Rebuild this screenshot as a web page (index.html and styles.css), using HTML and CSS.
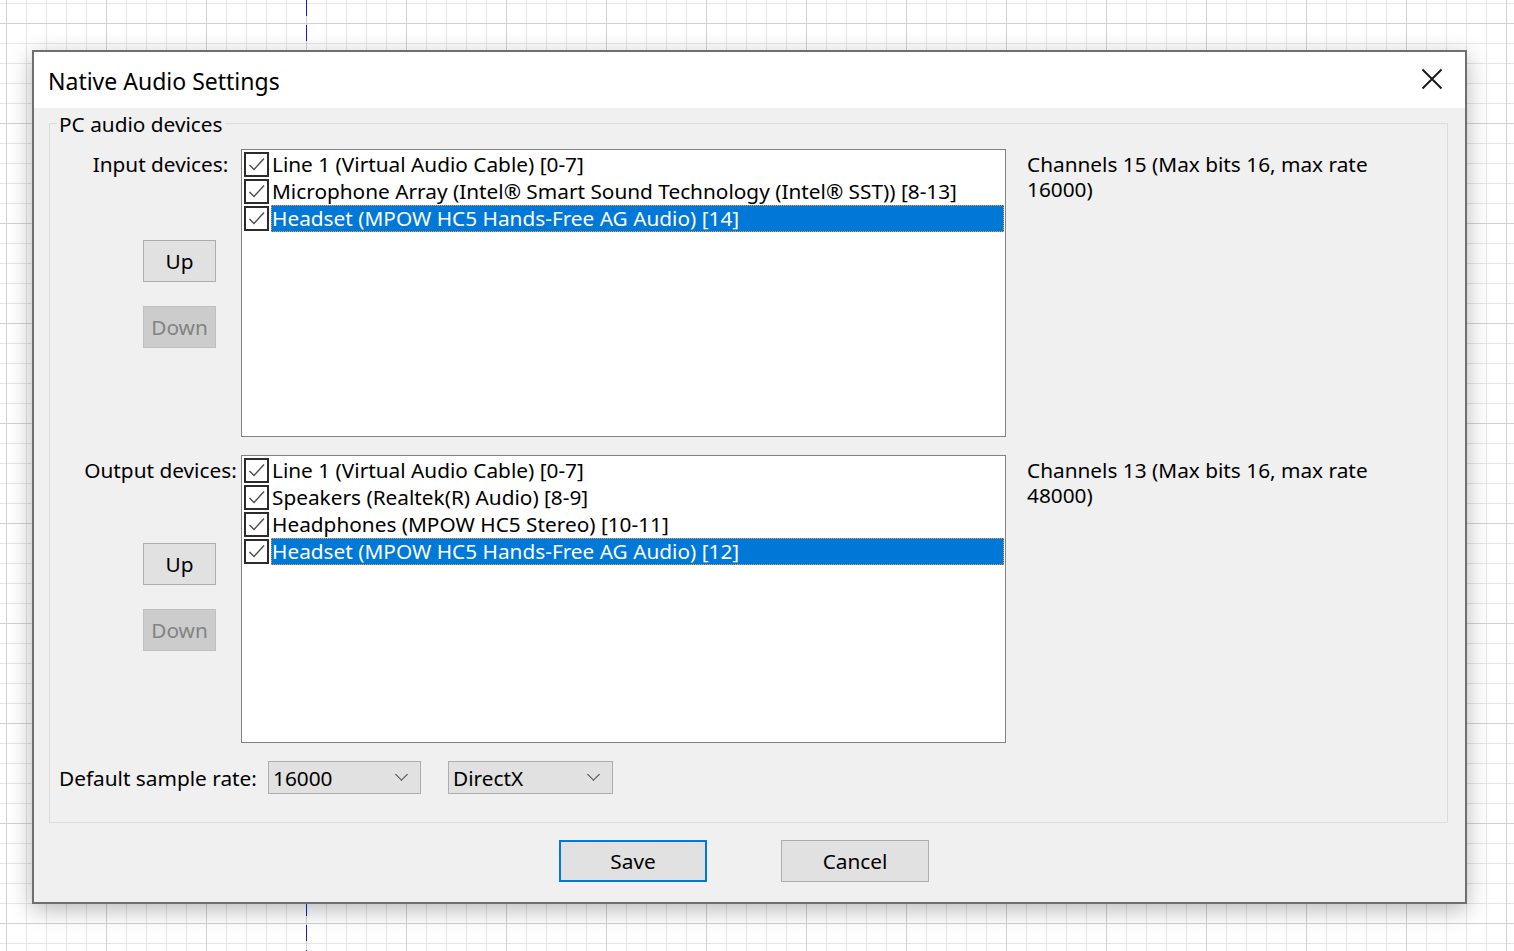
FILE: index.html
```html
<!DOCTYPE html>
<html lang="en">
<head>
  <meta charset="UTF-8">
  <title>Native Audio Settings</title>
  <link rel="stylesheet" href="styles.css">
</head>
<body>

  <div class="guide"></div>

  <div class="dialog">
    <div class="titlebar">
      <span class="title">Native Audio Settings</span>
      <svg class="close" width="22" height="22" viewBox="0 0 22 22">
        <path d="M1.5 1.5 L20.5 20.5 M20.5 1.5 L1.5 20.5" stroke="#1a1a1a" stroke-width="2" fill="none"/>
      </svg>
    </div>

    <div class="content">
      <fieldset class="group">
        <legend>PC audio devices</legend>

        <div class="section section-in">
          <div class="side">
            <div class="side-label">Input devices:</div>
            <button class="btn btn-up">Up</button>
            <button class="btn btn-down" disabled>Down</button>
          </div>
          <div class="list">
            <div class="row"><span class="check"></span><span class="text">Line 1 (Virtual Audio Cable) [0-7]</span></div>
            <div class="row"><span class="check"></span><span class="text">Microphone Array (Intel® Smart Sound Technology (Intel® SST)) [8-13]</span></div>
            <div class="row selected"><span class="check"></span><span class="text">Headset (MPOW HC5 Hands-Free AG Audio) [14]</span></div>
          </div>
          <div class="info">Channels 15 (Max bits 16, max rate 16000)</div>
        </div>

        <div class="section section-out">
          <div class="side">
            <div class="side-label">Output devices:</div>
            <button class="btn btn-up">Up</button>
            <button class="btn btn-down" disabled>Down</button>
          </div>
          <div class="list">
            <div class="row"><span class="check"></span><span class="text">Line 1 (Virtual Audio Cable) [0-7]</span></div>
            <div class="row"><span class="check"></span><span class="text">Speakers (Realtek(R) Audio) [8-9]</span></div>
            <div class="row"><span class="check"></span><span class="text">Headphones (MPOW HC5 Stereo) [10-11]</span></div>
            <div class="row selected"><span class="check"></span><span class="text">Headset (MPOW HC5 Hands-Free AG Audio) [12]</span></div>
          </div>
          <div class="info">Channels 13 (Max bits 16, max rate 48000)</div>
        </div>

        <div class="rate-row">
          <span class="rate-label">Default sample rate:</span>
          <div class="combo combo-rate"><span>16000</span><span class="chevron"></span></div>
          <div class="combo combo-api"><span>DirectX</span><span class="chevron"></span></div>
        </div>
      </fieldset>

      <div class="actions">
        <button class="btn btn-save">Save</button>
        <button class="btn btn-cancel">Cancel</button>
      </div>
    </div>
  </div>

</body>
</html>
```

FILE: styles.css
```css
html, body {
  margin: 0;
  height: 100%;
}

body {
  font-family: 'Noto Sans', 'Open Sans', sans-serif;
  font-size: 20.8px;
  color: #000;
  background-color: #fff;
  background-image:
    linear-gradient(to right, #d2d2d2 1px, transparent 1px),
    linear-gradient(to bottom, #d2d2d2 1px, transparent 1px),
    linear-gradient(to right, #e6e6e6 1px, transparent 1px),
    linear-gradient(to bottom, #e6e6e6 1px, transparent 1px);
  background-size: 100px 100px, 100px 100px, 20px 20px, 20px 20px;
  background-position: 6px 0, 0 23px, 6px 0, 0 3px;
  overflow: hidden;
  position: relative;
}

.guide {
  position: absolute;
  left: 306px;
  top: 0;
  width: 1px;
  height: 951px;
  background: repeating-linear-gradient(to bottom, #1515ff 0 16px, transparent 16px 25px);
}

/* the dialog window sits on the canvas */
.dialog {
  position: absolute;
  left: 32px;
  top: 50px;
  width: 1431px;
  height: 850px;
  border: 2px solid #6f6f6f;
  background: #f0f0f0;
  box-shadow: 0 6px 22px rgba(0,0,0,0.28);
  display: flex;
  flex-direction: column;
}

.titlebar {
  height: 56px;
  background: #fff;
  display: flex;
  align-items: center;
  justify-content: space-between;
  padding: 0 22px 0 14px;
}

.title {
  font-size: 23px;
  margin-top: 1px;
}

.close {
  margin-top: -2px;
}

.content {
  padding: 1px 17px 0 15px;
}

.group {
  margin: 0;
  padding: 12px 0 28px 0;
  border: 1px solid #dcdcdc;
}

.group legend {
  margin-left: 7px;
  padding: 2px 2px 0;
  line-height: 26px;
}

.section {
  display: grid;
  grid-template-columns: 191px 765px 1fr;
}

.section-out {
  margin-top: 18px;
}

.side {
  padding-left: 30px;
  display: flex;
  flex-direction: column;
  align-items: flex-start;
}

.side-label {
  width: 161px;
  text-align: center;
  line-height: 27px;
  margin-top: 2px;
  white-space: nowrap;
}

.btn {
  font-family: inherit;
  font-size: 20.8px;
  color: #000;
  background: #e1e1e1;
  border: 1px solid #adadad;
  padding: 0;
}

.btn-up {
  width: 73px;
  height: 42px;
  margin: 62px 0 0 63px;
}

.section-out .btn-up {
  margin-top: 59px;
}

.btn-down {
  width: 73px;
  height: 42px;
  margin: 24px 0 0 63px;
  background: #cccccc;
  border-color: #bfbfbf;
  color: #838383;
}

.list {
  height: 285px;
  background: #fff;
  border: 1px solid #828282;
  padding: 1px 1px 0 2px;
  box-sizing: content-box;
}

.row {
  display: flex;
  align-items: center;
  height: 27px;
}

.check {
  flex: none;
  width: 21px;
  height: 21px;
  border: 2px solid #2b2b2b;
  background: #fff url("data:image/svg+xml,%3Csvg xmlns='http://www.w3.org/2000/svg' width='21' height='21'%3E%3Cpath d='M3.5 11 L8 15.5 L18 4.5' fill='none' stroke='%23505050' stroke-width='1.5'/%3E%3C/svg%3E") no-repeat center;
}

.text {
  flex: 1;
  height: 27px;
  line-height: 27px;
  margin-left: 2px;
  padding-left: 1px;
  white-space: nowrap;
}

.selected .text {
  background: #0078d7;
  color: #fff;
  outline: 1px dotted #e8a040;
  outline-offset: -1px;
}

.info {
  padding-left: 21px;
  width: 370px;
  line-height: 25px;
  margin-top: 3px;
}

.rate-row {
  display: flex;
  align-items: center;
  margin-top: 18px;
  padding-left: 9px;
}

.rate-label {
  width: 209px;
}

.combo {
  height: 31px;
  background: #e1e1e1;
  border: 1px solid #adadad;
  display: flex;
  align-items: center;
  justify-content: space-between;
  padding: 0 14px 0 4px;
}

.combo-rate {
  width: 133px;
}

.combo-api {
  width: 145px;
  margin-left: 27px;
}

.chevron {
  width: 8px;
  height: 8px;
  border-right: 1px solid #444;
  border-bottom: 1px solid #444;
  transform: rotate(45deg);
  margin-top: -6px;
}

.actions {
  display: flex;
  justify-content: center;
  gap: 74px;
  margin-top: 17px;
  padding-right: 9px;
}

.btn-save,
.btn-cancel {
  width: 148px;
  height: 42px;
}

.btn-save {
  border: 2px solid #0078d7;
}
```
